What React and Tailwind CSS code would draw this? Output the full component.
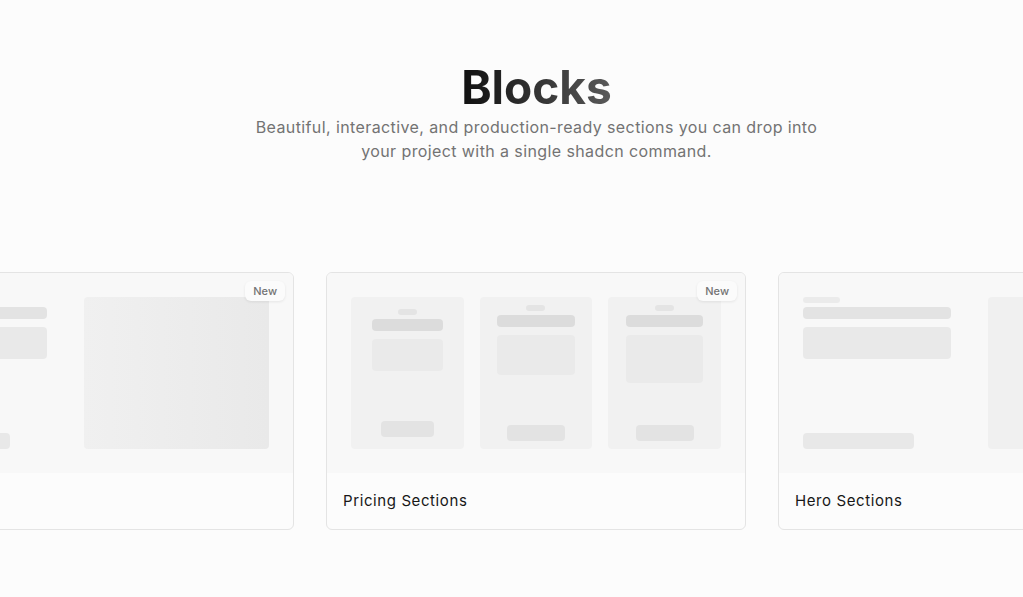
import React from 'react';

function Badge() {
    return (
        <span className="absolute top-2 right-2 rounded-md bg-[#fbfbfb] px-2 text-[11px] font-medium leading-5 text-[#737373] shadow-[0_1px_3px_rgba(0,0,0,0.08)]">
            New
        </span>
    );
}

function HeroPreview({ gradient }) {
    return (
        <div className="grid h-full grid-cols-2">
            <div className="flex flex-col">
                <div className="h-[6px] w-[20%] rounded-full bg-[#ebebeb]" />
                <div className="mt-1 h-3 w-[80%] rounded bg-[#e3e3e3]" />
                <div className="mt-2 h-8 w-[80%] rounded bg-[#e9e9e9]" />
                <div className="mt-auto h-4 w-[60%] rounded bg-[#e8e8e8]" />
            </div>
            <div
                className={
                    gradient
                        ? 'h-full rounded bg-gradient-to-r from-[#f0f0f0] to-[#e9e9e9]'
                        : 'h-full rounded bg-[#f0f0f0]'
                }
            />
        </div>
    );
}

const PLANS = [
    { py: 'py-3', bar: 'w-[71px]', box: 'h-8 w-[71px]', btn: 'w-[53px]' },
    { py: 'py-2', bar: 'w-[78px]', box: 'h-10 w-[78px]', btn: 'w-[58px]' },
    { py: 'py-2', bar: 'w-[77px]', box: 'h-12 w-[77px]', btn: 'w-[58px]' },
];

function PricingPreview() {
    return (
        <div className="grid h-full grid-cols-3 gap-4">
            {PLANS.map((p, i) => (
                <div key={i} className={`flex flex-col items-center rounded bg-[#f1f1f1] ${p.py}`}>
                    <div className="h-[6px] w-[19px] rounded-full bg-[#e4e4e4]" />
                    <div className={`mt-1 h-3 rounded bg-[#dcdcdc] ${p.bar}`} />
                    <div className={`mt-2 rounded bg-[#eaeaea] ${p.box}`} />
                    <div className={`mt-auto h-4 rounded bg-[#e3e3e3] ${p.btn}`} />
                </div>
            ))}
        </div>
    );
}

function BlockCard({ title, isNew, children }) {
    return (
        <div className="w-[420px] shrink-0 overflow-hidden rounded-md border border-[#e4e4e4] bg-[#fcfcfc]">
            <div className="relative h-[200px] bg-[#f8f8f8] p-6">
                {children}
                {isNew && <Badge />}
            </div>
            <div className="flex h-[56px] items-center px-4 text-[15px] tracking-[0.04em] text-[#171717]">
                {title}
            </div>
        </div>
    );
}

export default function App() {
    return (
        <div
            className="min-h-screen overflow-hidden bg-[#fcfcfc]"
            style={{ fontFamily: 'Inter, "Noto Sans", sans-serif' }}
        >
            <div className="pl-[50px] pt-16 text-center">
                <h1 className="inline-block bg-gradient-to-r from-[#111111] to-[#5a5a5a] bg-clip-text text-[46px] font-bold leading-none tracking-[0] text-transparent">
                    Blocks
                </h1>
                <p className="mx-auto mt-[5px] text-base leading-6 tracking-[0.025em] text-[#737373]">
                    Beautiful, interactive, and production-ready sections you can drop into
                    <br />
                    your project with a single shadcn command.
                </p>
            </div>

            <div className="ml-[-126px] mt-[109px] flex gap-8">
                <BlockCard title="Headers" isNew>
                    <HeroPreview gradient />
                </BlockCard>
                <BlockCard title="Pricing Sections" isNew>
                    <PricingPreview />
                </BlockCard>
                <BlockCard title="Hero Sections">
                    <HeroPreview />
                </BlockCard>
            </div>
        </div>
    );
}
